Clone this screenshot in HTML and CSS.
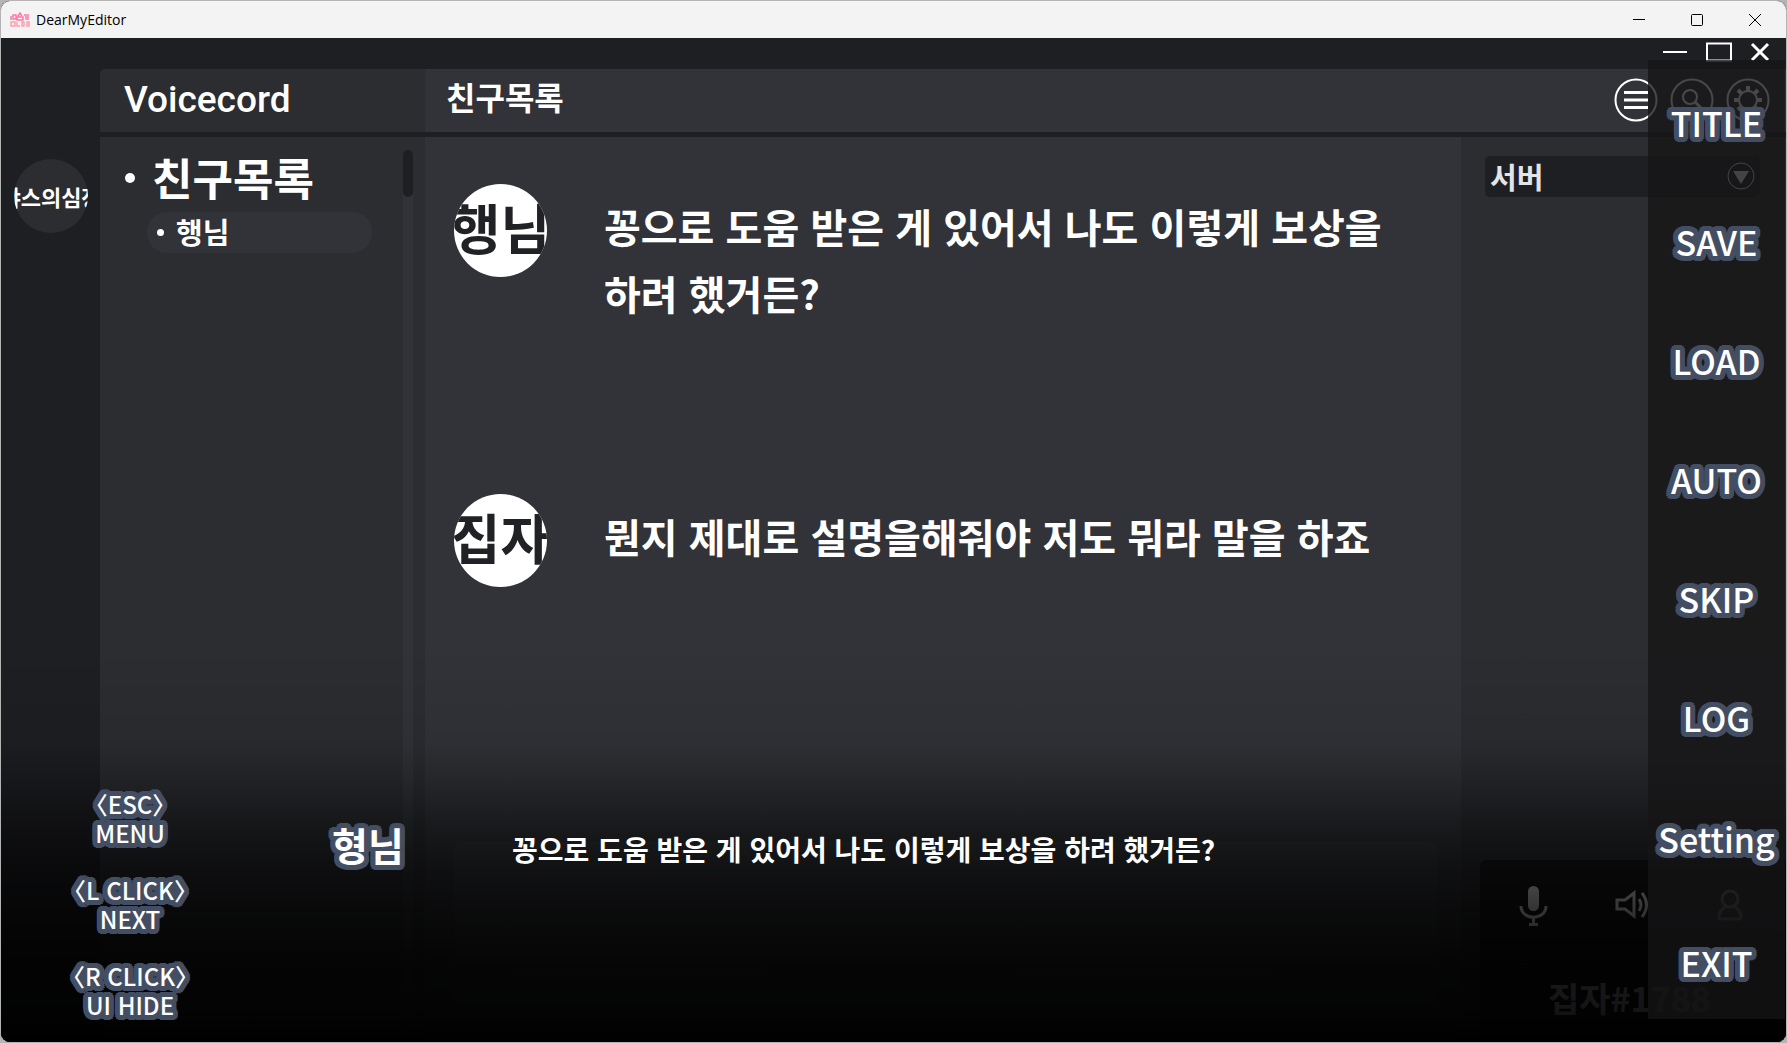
FILE: index.html
```html
<!DOCTYPE html>
<html lang="ko">
<head>
    <meta charset="UTF-8">
    <meta name="viewport" content="width=device-width, initial-scale=1.0">
    <title>DearMyEditor</title>
    <link rel="stylesheet" href="styles.css">
</head>
<body>
<div class="window">
    <header class="titlebar">
        <svg class="app-icon" viewBox="0 0 20 16" aria-hidden="true">
            <g fill="none" stroke="#ff78a8" stroke-width="1.5">
                <path d="M1 4v4M3 3h3v4H3zM8 4l2-3 2 3M7 5h6v3H7zM14 3h2v5M18 2v6"/>
                <path stroke="#f9a3ae" d="M1 10h4v4H1zM7 10v4h3M12 10h2v4h-2zM16 10h3v4h-3M16 12h3"/>
            </g>
        </svg>
        <h1 class="app-name">DearMyEditor</h1>
        <div class="titlebar-buttons">
            <button type="button" aria-label="Minimize">
                <svg viewBox="0 0 12 12"><path d="M0 5.5h12"/></svg>
            </button>
            <button type="button" aria-label="Maximize">
                <svg viewBox="0 0 12 12"><rect x=".5" y=".5" width="11" height="11" rx="1"/></svg>
            </button>
            <button type="button" aria-label="Close">
                <svg viewBox="0 0 12 12"><path d="M0 0l12 12M12 0L0 12"/></svg>
            </button>
        </div>
    </header>

    <div class="game">
        <div class="messenger">
            <div class="messenger-top">
                <svg viewBox="0 0 24 20"><path d="M0 10h24"/></svg>
                <svg viewBox="0 0 26 20"><path d="M1 1.5h24v17H1z"/></svg>
                <svg class="close" viewBox="0 0 20 20"><path d="M2 2l16 16M18 2L2 18"/></svg>
            </div>

            <nav class="servers">
                <button type="button" class="server"><span>갸스의심장</span></button>
            </nav>

            <div class="panels">
                <div class="panel-header">
                    <h2 class="brand">Voicecord</h2>
                    <h2 class="channel">친구목록</h2>
                    <div class="tools">
                        <button type="button" aria-label="목록">
                            <svg viewBox="0 0 44 44"><circle cx="22" cy="22" r="20.5"/><path stroke-width="3" d="M10 14.5h24M10 22h24M10 29.5h24"/></svg>
                        </button>
                        <button type="button" aria-label="검색">
                            <svg viewBox="0 0 44 44"><circle cx="22" cy="22" r="20.5"/><circle cx="20" cy="19" r="7"/><path stroke-width="3" d="M25 24l9 9"/></svg>
                        </button>
                        <button type="button" aria-label="설정">
                            <svg viewBox="0 0 44 44"><circle cx="22" cy="22" r="20.5"/><circle cx="22" cy="22" r="9"/><path stroke-width="4" d="M22 13V8M22 31v5M13 22H8M31 22h5M15.600 15.600L12 12M28.400 28.400L32 32M28.400 15.600L32 12M15.600 28.400L12 32"/></svg>
                        </button>
                    </div>
                </div>

                <aside class="friends">
                    <h3 class="friends-title">친구목록</h3>
                    <ul>
                        <li><a href="#" class="friend">행님</a></li>
                    </ul>
                    <div class="scrollbar"><div class="scroll-thumb"></div></div>
                </aside>

                <main class="chat">
                    <article class="message">
                        <div class="avatar"><span>행님</span></div>
                        <p>꽁으로 도움 받은 게 있어서 나도 이렇게 보상을<br>하려 했거든?</p>
                    </article>
                    <article class="message">
                        <div class="avatar"><span>집자</span></div>
                        <p>뭔지 제대로 설명을해줘야 저도 뭐라 말을 하죠</p>
                    </article>
                    <div class="chat-input"></div>
                </main>

                <aside class="info">
                    <button type="button" class="server-select">
                        <span>서버</span>
                        <svg viewBox="0 0 28 28"><circle cx="14" cy="14" r="13"/><path d="M6 9h16l-8 13z"/></svg>
                    </button>
                    <div class="voice">
                        <div class="voice-icons">
                            <svg viewBox="0 0 40 40"><rect x="15" y="0" width="11" height="25" rx="5.500" fill="currentColor" stroke="none"/><path d="M8 20c0 15 25 15 25 0M20.500 32v6M16 38.500h9"/></svg>
                            <svg viewBox="0 0 40 40"><path d="M5 14h8l9-7v23l-9-7H5zM27 13q4 6 0 12M30 7q9 12 0 24"/></svg>
                            <svg viewBox="0 0 40 40"><circle cx="20" cy="13" r="8"/><path d="M16 20q-7 5-7 11 0 2 3 2h16q3 0 3-2 0-6-7-11"/></svg>
                        </div>
                        <p>집자#1788</p>
                    </div>
                </aside>
            </div>
        </div>

        <div class="shade"></div>

        <section class="dialogue">
            <ul class="hints">
                <li>〈ESC〉<br>MENU</li>
                <li>〈L CLICK〉<br>NEXT</li>
                <li>〈R CLICK〉<br>UI HIDE</li>
            </ul>
            <h2 class="speaker">형님</h2>
            <p class="line">꽁으로 도움 받은 게 있어서 나도 이렇게 보상을 하려 했거든?</p>
        </section>

        <nav class="game-menu">
            <div class="menu-group">
                <button type="button">TITLE</button>
                <button type="button">SAVE</button>
                <button type="button">LOAD</button>
                <button type="button">AUTO</button>
                <button type="button">SKIP</button>
                <button type="button">LOG</button>
            </div>
            <div class="menu-group">
                <button type="button">Setting</button>
                <button type="button">EXIT</button>
            </div>
        </nav>
    </div>
</div>
</body>
</html>
```
FILE: styles.css
```css
:root {
    --dark: #1e1f23;
    --panel: #2b2d31;
    --chat: #313338;
    --outline: #434e63;
}

* {
    box-sizing: border-box;
}

body {
    font-family: 'Noto Sans CJK KR', sans-serif;
    margin: 0;
    background: #b4b4b4;
    color: white;
}

h1, h2, h3, p, ul {
    margin: 0;
    padding: 0;
}

ul {
    list-style: none;
}

button {
    padding: 0;
    border: none;
    background: none;
    color: inherit;
    font-family: inherit;
    cursor: pointer;
}

svg {
    display: block;
    fill: none;
    stroke: currentColor;
}

.window {
    display: flex;
    flex-direction: column;
    height: 100vh;
    border: 1px solid #b4b4b4;
    border-radius: 10px;
    overflow: hidden;
    background: black;
}

/* system title bar */
.titlebar {
    display: flex;
    align-items: center;
    height: 37px;
    padding-left: 9px;
    background: #f3f3f3;
    color: black;
}

.app-icon {
    width: 20px;
    height: 16px;
    margin-right: 6px;
}

.app-name {
    flex: 1;
    font-family: 'Open Sans', sans-serif;
    font-size: 14px;
    font-weight: normal;
}

.titlebar-buttons {
    display: flex;
    margin-right: 2px;
}

.titlebar-buttons button {
    display: flex;
    justify-content: center;
    width: 58px;
}

.titlebar-buttons svg {
    width: 12px;
    height: 12px;
}

.game {
    position: relative;
    flex: 1;
    min-height: 0;
}

/* messenger screen */
.messenger {
    display: grid;
    grid-template-columns: 99px 1fr;
    grid-template-rows: 31px 1fr;
    height: 100%;
    background: var(--dark);
}

.messenger-top {
    grid-column: 1 / 3;
    display: flex;
    justify-content: flex-end;
    align-items: center;
    gap: 18px;
    padding: 0 16px 3px 0;
}

.messenger-top svg {
    width: 26px;
    height: 20px;
    stroke-width: 2;
}

.messenger-top .close {
    width: 20px;
    stroke-width: 3;
}

.servers {
    padding: 90px 0 0 13px;
}

.server {
    display: flex;
    justify-content: center;
    align-items: center;
    width: 74px;
    height: 74px;
    border-radius: 50%;
    overflow: hidden;
    background: var(--panel);
    font-size: 22px;
    font-weight: bold;
    white-space: nowrap;
}

.panels {
    display: grid;
    grid-template-columns: 325px 1fr 325px;
    grid-template-rows: 63px 1fr;
    row-gap: 5px;
    border-top-left-radius: 5px;
    overflow: hidden;
}

.panel-header {
    grid-column: 1 / 4;
    display: grid;
    grid-template-columns: 325px 1fr auto;
    align-items: center;
    padding-bottom: 2px;
    background: linear-gradient(to right, var(--panel) 325px, var(--chat) 325px);
}

.brand {
    padding-left: 24px;
    font-family: Roboto, sans-serif;
    font-size: 37px;
    font-weight: 500;
    line-height: 60px;
}

.channel {
    padding: 0 0 8px 21px;
    font-size: 32px;
    line-height: 52px;
}

.tools {
    display: flex;
    gap: 12px;
    padding-right: 16px;
}

.tools svg {
    width: 44px;
    height: 44px;
    stroke-width: 2;
}

.friends {
    position: relative;
    padding: 10px 53px 0 47px;
    background: var(--panel);
}

.friends-title {
    position: relative;
    padding-left: 5px;
    font-size: 44px;
    line-height: 60px;
}

.friends-title::before,
.friend::before {
    content: '';
    position: absolute;
    left: -22px;
    top: 26px;
    width: 10px;
    height: 10px;
    border-radius: 50%;
    background: white;
}

.friend {
    position: relative;
    display: block;
    margin-top: 5px;
    padding: 0 29px 3px;
    border-radius: 20px;
    background: var(--chat);
    color: white;
    font-size: 29px;
    font-weight: bold;
    line-height: 38px;
    text-decoration: none;
}

.friend::before {
    left: 10px;
    top: 17px;
    width: 7px;
    height: 7px;
}

.scrollbar {
    position: absolute;
    top: 13px;
    bottom: 0;
    right: 12px;
    width: 10px;
    background: var(--chat);
    border-radius: 5px;
}

.scroll-thumb {
    height: 47px;
    border-radius: 5px;
    background: var(--dark);
}

.chat {
    display: flex;
    flex-direction: column;
    padding: 47px 24px 0 29px;
    background: var(--chat);
}

.message {
    display: flex;
    gap: 57px;
    height: 310px;
}

.avatar {
    display: flex;
    flex: none;
    justify-content: center;
    align-items: center;
    width: 93px;
    height: 93px;
    padding-bottom: 8px;
    border-radius: 50%;
    overflow: hidden;
    background: white;
    color: #202226;
    font-size: 54px;
    font-weight: bold;
    white-space: nowrap;
}

.message p {
    padding-top: 9px;
    font-size: 40px;
    font-weight: bold;
    line-height: 67px;
    white-space: nowrap;
}

.chat-input {
    flex: 1;
    margin: 38px 0 36px;
    border-radius: 8px;
    background: #36383d;
}

.info {
    display: flex;
    flex-direction: column;
    justify-content: space-between;
    background: var(--panel);
}

.server-select {
    display: flex;
    justify-content: space-between;
    align-items: center;
    height: 41px;
    margin: 19px 26px 0 24px;
    padding: 0 5px 1px 5px;
    border-radius: 5px;
    background: var(--dark);
    color: #e3e4e8;
    font-size: 29px;
    font-weight: bold;
}

.server-select svg {
    width: 28px;
    height: 28px;
}

.server-select path {
    fill: currentColor;
    stroke: none;
}

.voice {
    margin-left: 19px;
    height: 182px;
    border-top-left-radius: 6px;
    background: #17181b;
}

.voice-icons {
    display: flex;
    justify-content: space-between;
    padding: 26px 36px 0 33px;
}

.voice-icons svg {
    width: 40px;
    height: 40px;
    stroke-width: 3;
}

.voice p {
    padding: 44px 0 0 68px;
    font-size: 34px;
    font-weight: bold;
    line-height: 56px;
}

/* darkens the scene behind the dialogue */
.shade {
    position: absolute;
    inset: auto 0 0 0;
    height: 400px;
    background: linear-gradient(to bottom, transparent, rgba(0,0,0,0.08) 25%, rgba(0,0,0,0.24) 34%, rgba(0,0,0,0.5) 46%, rgba(0,0,0,0.68) 56%, rgba(0,0,0,0.79) 66%, rgba(0,0,0,0.9) 80%, rgba(0,0,0,0.92) 92%, black);
}

/* dialogue */
.dialogue {
    position: absolute;
    inset: auto 139px 0 0;
    display: grid;
    grid-template-columns: 258px 253px 1fr;
    height: 254px;
}

.hints {
    display: flex;
    flex-direction: column;
    gap: 28px;
    padding-top: 1px;
    font-size: 24px;
    font-weight: 500;
    line-height: 29px;
    text-align: center;
}

.speaker {
    justify-self: center;
    padding-top: 26px;
    margin-right: 35px;
    font-size: 39px;
    line-height: 60px;
}

.line {
    padding-top: 31px;
    font-size: 28px;
    font-weight: bold;
    line-height: 60px;
    white-space: nowrap;
}

/* thick rounded outline */
.hints li,
.speaker,
.game-menu button {
    text-shadow:
        5px 0 var(--outline), 5px 2px var(--outline), 4px 4px var(--outline), 2px 5px var(--outline),
        0 5px var(--outline), -2px 5px var(--outline), -4px 4px var(--outline), -5px 2px var(--outline),
        -5px 0 var(--outline), -5px -2px var(--outline), -4px -4px var(--outline), -2px -5px var(--outline),
        0 -5px var(--outline), 2px -5px var(--outline), 4px -4px var(--outline), 5px -2px var(--outline),
        2px 2px var(--outline), -2px 2px var(--outline), 2px -2px var(--outline), -2px -2px var(--outline);
}

/* menu over the right edge */
.game-menu {
    position: absolute;
    inset: 22px 1px 23px auto;
    display: flex;
    flex-direction: column;
    justify-content: space-between;
    width: 137px;
    padding: 40px 0 33px;
    background: rgba(22,21,22,0.78);
}

.menu-group {
    display: flex;
    flex-direction: column;
    gap: 73px;
}

.menu-group:last-child {
    gap: 78px;
}

.game-menu button {
    font-size: 34px;
    font-weight: 500;
    line-height: 46px;
}
```
